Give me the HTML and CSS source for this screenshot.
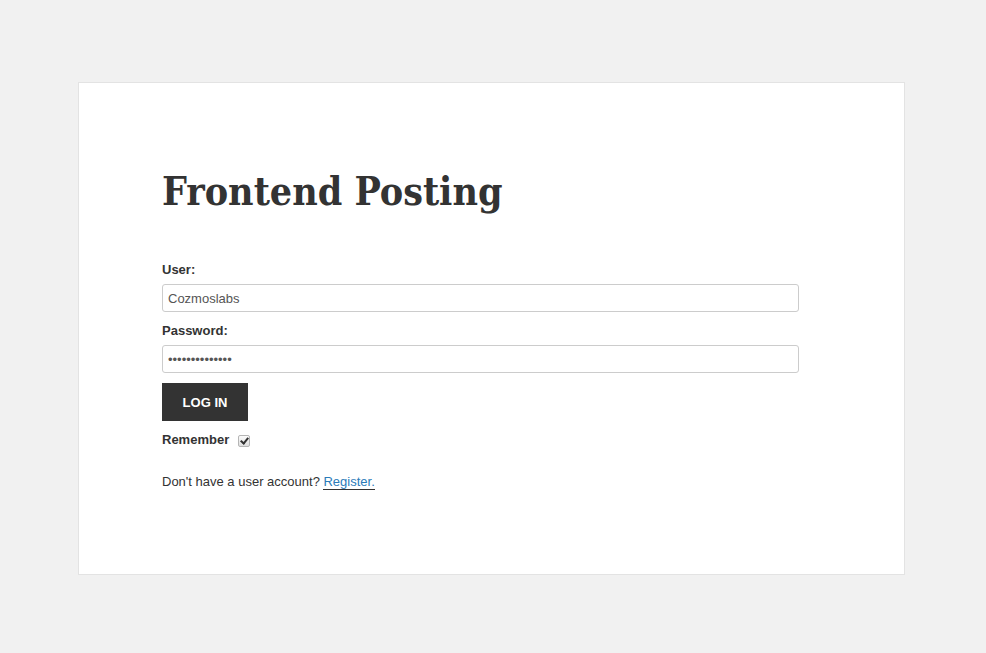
FILE: index.html
```html
<!DOCTYPE html>
<html lang="en">
<head>
  <meta charset="UTF-8">
  <title>Frontend Posting</title>
  <link rel="stylesheet" href="styles.css">
</head>
<body>

<div class="page">
  <h1 class="title">Frontend Posting</h1>

  <form class="login" action="javascript:;">
    <label class="label" for="user">User:</label>
    <input class="field" id="user" type="text" value="Cozmoslabs">

    <label class="label" for="pass">Password:</label>
    <input class="field" id="pass" type="password" value="cozmoslabs1234">

    <button class="btn" type="submit">LOG IN</button>

    <label class="remember">Remember <input type="checkbox" checked></label>
  </form>

  <p class="register">Don't have a user account? <a href="javascript:;">Register.</a></p>
</div>

</body>
</html>
```

FILE: styles.css
```css
* {
  margin: 0;
  padding: 0;
  box-sizing: border-box;
}
body {
  background: #f1f1f1;
  font-family: "Liberation Sans", Arial, sans-serif;
  font-size: 13px;
  color: #333;
  padding: 82px 0 0 78px;
}
.page {
  width: 827px;
  height: 493px;
  background: #fff;
  border: 1px solid #e3e3e3;
  padding: 82px 105px 0 83px;
}
.title {
  font-family: "DejaVu Serif", serif;
  font-stretch: condensed;
  font-weight: bold;
  font-size: 39px;
  line-height: 52px;
  color: #333;
  margin-bottom: 44px;
}
.login {
  display: flex;
  flex-direction: column;
  align-items: flex-start;
}
.label {
  font-weight: bold;
  line-height: 18px;
  margin-bottom: 5px;
}
.field {
  width: 637px;
  height: 28px;
  border: 1px solid #ccc;
  border-radius: 3px;
  padding: 0 5px;
  font-family: inherit;
  font-size: 13px;
  color: #555;
  margin-bottom: 10px;
}
.btn {
  width: 86px;
  height: 38px;
  background: #333;
  color: #fff;
  border: 0;
  font-family: inherit;
  font-size: 13px;
  font-weight: bold;
  margin-bottom: 10px;
}
.remember {
  display: flex;
  align-items: center;
  gap: 9px;
  font-weight: bold;
  line-height: 18px;
}
.remember input {
  appearance: none;
  -webkit-appearance: none;
  width: 12px;
  height: 12px;
  margin: 1px 0 0;
  border: 1px solid #b5b5b5;
  border-radius: 2px;
  background: linear-gradient(#fcfcfc, #dedede);
  position: relative;
}
.remember input:checked::after {
  content: "";
  position: absolute;
  left: 3px;
  top: 0;
  width: 3px;
  height: 6px;
  border: solid #333;
  border-width: 0 2px 2px 0;
  transform: rotate(40deg);
}
.register {
  margin-top: 24px;
  line-height: 18px;
}
.register a {
  color: #2b7bb9;
  text-decoration: none;
  border-bottom: 1px solid #333;
}
```
